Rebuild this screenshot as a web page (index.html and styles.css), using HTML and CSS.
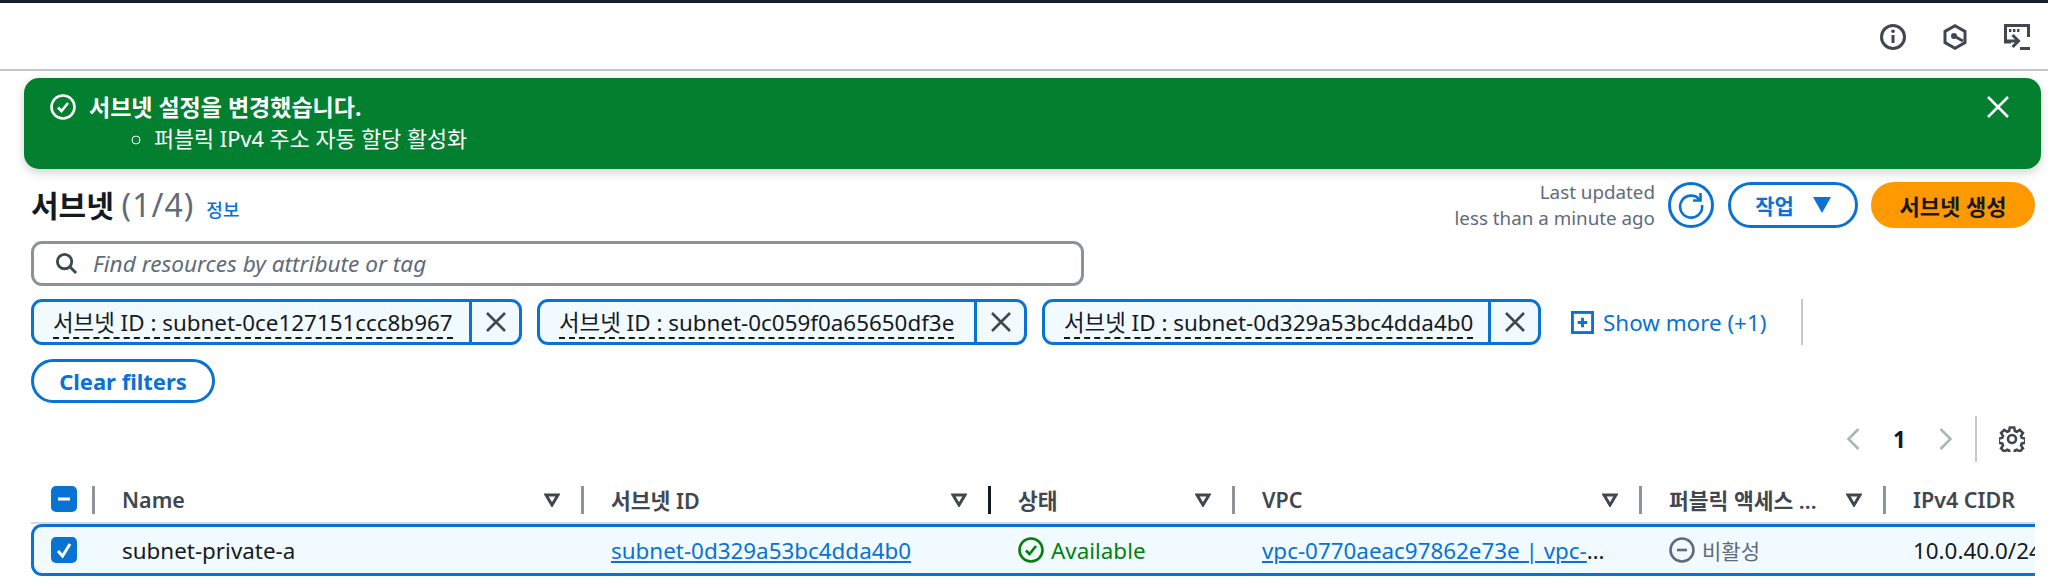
FILE: index.html
```html
<!DOCTYPE html>
<html lang="ko">
<head>
<meta charset="utf-8">
<title>서브넷</title>
<link rel="stylesheet" href="styles.css">
</head>
<body>
<div class="topbar"></div>
<header class="toolbar">
  <svg class="tool-icon" viewBox="0 0 26 26"><circle cx="13" cy="13" r="11.500" class="stroke-dark heavy"/><path d="M13 11v8" class="stroke-dark heavy"/><circle cx="13" cy="7.300" r="1.800" class="fill-dark"/></svg>
  <svg class="tool-icon" viewBox="0 0 26 26"><path d="M13 1.700l10 5.700v11.200L13 24.300 3 18.600V7.400z" class="stroke-dark heavy"/><circle cx="12" cy="12" r="3" class="fill-dark"/><path d="M12 12l9 5" class="stroke-dark heavy"/></svg>
  <svg class="tool-icon" viewBox="0 0 26 26"><path d="M7 18H1.500V1.500h23V13" class="stroke-dark heavy"/><path d="M5 6.500h2.400M9 6.500h2.400M13 6.500h2.400" class="stroke-dark heavy"/><path d="M2 17h11M8.500 11l6 6-6 6" class="stroke-dark heavy"/><path d="M16 24.500h10" class="stroke-dark heavy"/></svg>
</header>
<section class="flash">
  <svg class="flash-check" viewBox="0 0 26 26"><circle cx="13" cy="13" r="11.500" class="stroke-white"/><path d="M8 13.500l3.500 3.500 6.500-8" class="stroke-white"/></svg>
  <div class="flash-body">
    <div class="flash-title">서브넷 설정을 변경했습니다.</div>
    <ul class="flash-list"><li>퍼블릭 IPv4 주소 자동 할당 활성화</li></ul>
  </div>
  <svg class="flash-close" viewBox="0 0 26 24"><path d="M3 2l20 20M23 2L3 22" class="stroke-white"/></svg>
</section>
<section class="heading">
  <div class="heading-title"><h1>서브넷 <span class="count">(1/4)</span></h1><a class="info">정보</a></div>
  <div class="actions">
    <div class="updated">Last updated<br>less than a minute ago</div>
    <button class="btn btn-icon"><svg viewBox="0 0 30 30" class="refresh"><path d="M23.500 9.500A11 11 0 1 0 26 15" class="stroke-blue"/><path d="M24.500 3v7.500H17" class="stroke-blue"/></svg></button>
    <button class="btn btn-action">작업<svg class="caret" viewBox="0 0 18 16"><path d="M0 0h18L9 16z" class="fill-blue"/></svg></button>
    <button class="btn btn-primary">서브넷 생성</button>
  </div>
</section>
<div class="search">
  <svg class="search-icon" viewBox="0 0 24 24"><circle cx="10" cy="10" r="7.500" class="stroke-dark heavy"/><path d="M15.500 15.500L22 22" class="stroke-dark heavy"/></svg>
  <span class="search-text">Find resources by attribute or tag</span>
</div>
<div class="tokens">
  <div class="token token-a"><span class="token-label"><span class="dashed">서브넷 ID : subnet-0ce127151ccc8b967</span></span><span class="token-x"><svg viewBox="0 0 22 22"><path d="M2 2l18 18M20 2L2 20" class="stroke-dark"/></svg></span></div>
  <div class="token token-b"><span class="token-label"><span class="dashed">서브넷 ID : subnet-0c059f0a65650df3e</span></span><span class="token-x"><svg viewBox="0 0 22 22"><path d="M2 2l18 18M20 2L2 20" class="stroke-dark"/></svg></span></div>
  <div class="token token-c"><span class="token-label"><span class="dashed">서브넷 ID : subnet-0d329a53bc4dda4b0</span></span><span class="token-x"><svg viewBox="0 0 22 22"><path d="M2 2l18 18M20 2L2 20" class="stroke-dark"/></svg></span></div>
  <a class="show-more"><svg viewBox="0 0 24 24"><rect x="1.500" y="1.500" width="21" height="21" class="stroke-blue heavy"/><path d="M12 7v10M7 12h10" class="stroke-blue heavy"/></svg>Show more (+1)</a>
  <span class="token-sep"></span>
</div>
<button class="btn btn-clear">Clear filters</button>
<div class="pager">
  <svg class="chev" viewBox="0 0 14 24"><path d="M12 2L2 12l10 10" class="stroke-gray"/></svg>
  <span class="page-num">1</span>
  <svg class="chev" viewBox="0 0 14 24"><path d="M2 2l10 10L2 22" class="stroke-gray"/></svg>
  <span class="pager-sep"></span>
  <svg class="gear" viewBox="0 0 26 26"><path d="M10.800 1.500h4.400l.7 3.500 1.900.8 3-1.900 3.100 3.100-1.900 3 .8 1.900 3.400.7v4.200l-3.400.7-.8 1.900 1.900 3-3.100 3.100-3-1.900-1.900.8-.7 3.500h-4.400l-.7-3.500-1.900-.8-3 1.900-3.100-3.100 1.900-3-.8-1.900-3.400-.7v-4.200l3.400-.7.8-1.900-1.900-3 3.100-3.100 3 1.900 1.900-.8z" class="stroke-dark"/><circle cx="13" cy="13" r="4" class="stroke-dark"/></svg>
</div>
<div class="table">
  <div class="thead">
    <div class="th-check"><span class="box"><svg viewBox="0 0 26 26"><path d="M7 13h12" class="stroke-white heavy"/></svg></span></div>
    <div class="th"><span class="th-label">Name</span><svg class="filter" viewBox="0 0 16 14"><path d="M2 2h12l-6 10z" class="stroke-dark heavy"/></svg></div>
    <div class="th"><span class="th-label">서브넷 ID</span><svg class="filter" viewBox="0 0 16 14"><path d="M2 2h12l-6 10z" class="stroke-dark heavy"/></svg></div>
    <div class="th th-active"><span class="th-label">상태</span><svg class="filter" viewBox="0 0 16 14"><path d="M2 2h12l-6 10z" class="stroke-dark heavy"/></svg></div>
    <div class="th"><span class="th-label">VPC</span><svg class="filter" viewBox="0 0 16 14"><path d="M2 2h12l-6 10z" class="stroke-dark heavy"/></svg></div>
    <div class="th"><span class="th-label">퍼블릭 액세스 ...</span><svg class="filter" viewBox="0 0 16 14"><path d="M2 2h12l-6 10z" class="stroke-dark heavy"/></svg></div>
    <div class="th"><span class="th-label">IPv4 CIDR</span></div>
  </div>
  <div class="row">
    <div class="td-check"><span class="box box-row"><svg viewBox="0 0 26 26"><path d="M7 14l4.500 5L19 7" class="stroke-white heavy"/></svg></span></div>
    <div class="td">subnet-private-a</div>
    <div class="td"><a class="link">subnet-0d329a53bc4dda4b0</a></div>
    <div class="td status-ok"><svg viewBox="0 0 26 26"><circle cx="13" cy="13" r="11.500" class="stroke-green"/><path d="M8 13.500l3.500 3.500 6.500-8" class="stroke-green"/></svg>Available</div>
    <div class="td td-clip"><a class="link">vpc-0770aeac97862e73e | vpc-study</a></div>
    <div class="td status-off"><svg viewBox="0 0 26 26"><circle cx="13" cy="13" r="11.500" class="stroke-gray-d"/><path d="M8 13h10" class="stroke-gray-d"/></svg><span class="status-off-text">비활성</span></div>
    <div class="td">10.0.40.0/24</div>
  </div>
</div>
</body>
</html>
```

FILE: styles.css
```css
* { box-sizing: border-box; }
html, body { margin: 0; padding: 0; }
body {
  width: 2048px;
  height: 583px;
  overflow: hidden;
  background: #fff;
  color: #16191f;
  font-family: "Noto Sans", "Noto Sans CJK KR", sans-serif;
  font-size: 22.4px;
}
svg { display: block; fill: none; }
.stroke-dark, .stroke-white, .stroke-blue, .stroke-gray, .stroke-green, .stroke-gray-d { fill: none; stroke-width: 2.6; }
.stroke-dark { stroke: #414750; }
.stroke-white { stroke: #fff; }
.stroke-blue { stroke: #0972d3; }
.stroke-gray { stroke: #aab7b8; }
.stroke-green { stroke: #037f0c; }
.stroke-gray-d { stroke: #5f6b7a; }
.heavy { stroke-width: 3; }
.fill-dark { fill: #414750; }
.fill-blue { fill: #0972d3; }

.topbar { height: 3px; background: #161d2b; }
.toolbar {
  height: 68px;
  padding: 21px 18px 0 0;
  display: flex;
  justify-content: flex-end;
  gap: 36px;
  border-bottom: 2px solid #c4c5c8;
}
.tool-icon { width: 26px; height: 26px; }

.flash {
  margin: 7px 7px 0 24px;
  height: 91px;
  padding: 15px 30px 0 26px;
  display: flex;
  background: #037f30;
  color: #fff;
  border-radius: 15px;
  box-shadow: 0 4px 10px rgba(0, 28, 36, .18);
}
.flash-check { width: 26px; height: 26px; margin-top: 1px; }
.flash-body { flex: 1; margin-left: 13px; }
.flash-title { font-size: 23px; font-weight: 700; line-height: 28px; }
.flash-list { margin: 4px 0 0; padding: 0 0 0 65px; font-size: 21.800px; line-height: 28px; list-style: circle; }
.flash-close { width: 26px; height: 24px; margin-top: 2px; }

.heading {
  margin: 13px 13px 0 31px;
  height: 46px;
  display: flex;
  justify-content: space-between;
}
.heading-title { display: flex; align-items: baseline; gap: 12px; }
h1 { margin: 0; font-size: 30px; font-weight: 700; line-height: 46px; }
.count { font-weight: 400; color: #5f6b7a; font-size: 32px; letter-spacing: 1px; }
.info { font-size: 18px; font-weight: 500; color: #0972d3; }
.actions { display: flex; align-items: center; }
.updated { text-align: right; font-size: 18.800px; line-height: 26px; color: #5f6b7a; margin-right: 13px; }
.btn {
  font-family: inherit;
  padding: 0;
  height: 46px;
  border-radius: 23px;
  border: 3px solid #0972d3;
  background: #fff;
  color: #0972d3;
  font-size: 21px;
  font-weight: 700;
  display: flex;
  align-items: center;
  justify-content: center;
}
.btn-icon { width: 46px; margin-right: 14px; }
.refresh { width: 30px; height: 30px; }
.btn-action { width: 130px; margin-right: 13px; gap: 19px; }
.caret { width: 18px; height: 16px; }
.btn-primary { width: 164px; background: #ff9900; border-color: #ff9900; color: #16191f; font-size: 22px; }

.search {
  margin: 13px 0 0 31px;
  width: 1053px;
  height: 45px;
  display: flex;
  align-items: center;
  padding-left: 21px;
  border: 3px solid #879596;
  border-radius: 11px;
}
.search-icon { width: 23px; height: 23px; }
.search-text { margin-left: 15px; font-style: italic; font-size: 22.600px; color: #5f6b7a; }

.tokens { margin: 13px 0 0 31px; height: 46px; display: flex; align-items: stretch; gap: 15px; }
.token {
  display: flex;
  background: #f1faff;
  border: 3px solid #0972d3;
  border-radius: 11px;
}
.token-a { width: 491px; }
.token-b { width: 490px; }
.token-c { width: 499px; }
.token-label { flex: 1; padding: 5px 0 0 19px; white-space: nowrap; overflow: hidden; }
.dashed { display: inline-block; border-bottom: 2px dashed #16191f; line-height: 28px; }
.token-x { width: 50px; border-left: 3px solid #0972d3; display: flex; align-items: center; justify-content: center; }
.token-x svg { width: 22px; height: 22px; }
.show-more { margin-left: 15px; display: flex; align-items: center; gap: 9px; color: #0972d3; width: 217px; }
.show-more svg { width: 23px; height: 23px; }
.token-sep { width: 2px; background: #c6c6cd; margin-left: -2px; }

.btn-clear { margin: 14px 0 0 31px; width: 184px; height: 44px; font-size: 22px; }

.pager { height: 46px; margin-top: 13px; display: flex; align-items: center; padding-left: 1846px; }
.chev { width: 15px; height: 24px; }
.page-num { width: 92px; margin-right: -15px; padding-left: 32px; font-weight: 700; }
.pager-sep { width: 2px; height: 46px; background: #c6c6cd; margin-left: 22px; }
.gear { width: 26px; height: 26px; margin-left: 22px; }

.table { margin: 24px 13px 0 31px; overflow: hidden; }
.thead {
  height: 38px;
  display: grid;
  grid-template-columns: 63px 489px 407px 244px 407px 244px 150px;
  border-bottom: 2px solid #d5dbdb;
  align-items: start;
}
.th-check { padding-left: 20px; height: 28px; }
.th {
  height: 28px;
  margin-left: -2px;
  border-left: 3px solid #8d9396;
  padding: 0 23px 0 27px;
  display: flex;
  align-items: center;
  justify-content: space-between;
  font-weight: 600;
  font-size: 21.500px;
  color: #414750;
}
.th-active { border-left-color: #16191f; }
.th-label { white-space: nowrap; margin-top: -2px; }
.filter { width: 16px; height: 14px; flex: none; }
.box { display: block; width: 26px; height: 26px; background: #0972d3; border-radius: 5px; }
.box svg { width: 26px; height: 26px; }
.row {
  height: 52px;
  display: grid;
  grid-template-columns: 60px 489px 407px 244px 407px 244px 150px;
  align-items: center;
  background: #f1faff;
  border: solid #0972d3;
  border-width: 3px 0 3px 3px;
  border-radius: 11px 0 0 11px;
}
.td-check { padding-left: 17px; }
.td { padding-left: 28px; white-space: nowrap; color: #16191f; }
.link { color: #0972d3; text-decoration: underline; }
.td-clip { overflow: hidden; text-overflow: ellipsis; padding-right: 33px; }
.status-ok, .status-off { display: flex; align-items: center; gap: 7px; }
.status-ok { color: #037f0c; }
.status-off { color: #5f6b7a; }
.status-off-text { font-size: 21px; }
.status-ok svg, .status-off svg { width: 26px; height: 26px; flex: none; }
```
